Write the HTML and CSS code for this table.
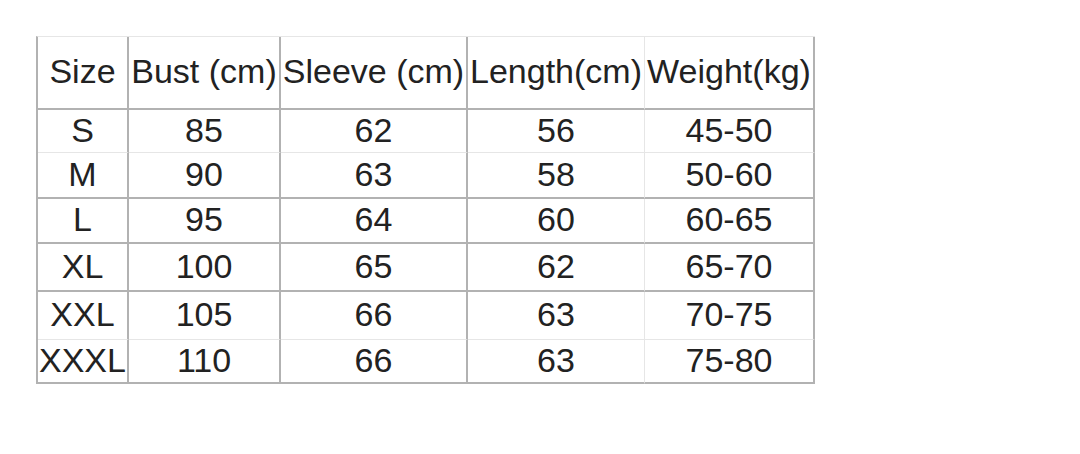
FILE: index.html
```html
<!DOCTYPE html>
<html>
<head>
<meta charset="utf-8">
<link rel="stylesheet" href="styles.css">
</head>
<body>
<div class="page">
  <div class="chart">
    <div class="row head">
      <div class="cell">Size</div>
      <div class="cell">Bust (cm)</div>
      <div class="cell">Sleeve (cm)</div>
      <div class="cell lt">Length(cm)</div>
      <div class="cell">Weight(kg)</div>
    </div>
    <div class="row r1 light">
      <div class="cell">S</div>
      <div class="cell">85</div>
      <div class="cell">62</div>
      <div class="cell lt">56</div>
      <div class="cell">45-50</div>
    </div>
    <div class="row r2">
      <div class="cell">M</div>
      <div class="cell">90</div>
      <div class="cell">63</div>
      <div class="cell lt">58</div>
      <div class="cell">50-60</div>
    </div>
    <div class="row r3">
      <div class="cell">L</div>
      <div class="cell">95</div>
      <div class="cell">64</div>
      <div class="cell lt">60</div>
      <div class="cell">60-65</div>
    </div>
    <div class="row r4">
      <div class="cell">XL</div>
      <div class="cell">100</div>
      <div class="cell">65</div>
      <div class="cell lt">62</div>
      <div class="cell">65-70</div>
    </div>
    <div class="row r5 light">
      <div class="cell">XXL</div>
      <div class="cell">105</div>
      <div class="cell">66</div>
      <div class="cell lt">63</div>
      <div class="cell">70-75</div>
    </div>
    <div class="row r6">
      <div class="cell">XXXL</div>
      <div class="cell">110</div>
      <div class="cell">66</div>
      <div class="cell lt">63</div>
      <div class="cell">75-80</div>
    </div>
  </div>
</div>
</body>
</html>
```

FILE: styles.css
```css
html, body {
  margin: 0;
  padding: 0;
  background: #ffffff;
}
.page {
  padding: 36px 0 0 36px;
}
.chart {
  display: inline-flex;
  flex-direction: column;
  border-left: 2px solid #b2b2b2;
  border-top: 1px solid #e6e6e6;
  font-family: "Liberation Sans", Arial, sans-serif;
  font-size: 34px;
  color: #222222;
}
.row {
  display: grid;
  grid-template-columns: 91px 152px 187px 177px 170px;
  box-sizing: border-box;
}
.cell {
  box-sizing: border-box;
  display: flex;
  align-items: center;
  justify-content: center;
  white-space: nowrap;
  padding-bottom: 2px;
  border-right: 2px solid #b2b2b2;
  border-bottom: 2px solid #b2b2b2;
  overflow: visible;
}
.cell.lt {
  border-right: 1px solid #e6e6e6;
}
.light .cell {
  border-bottom: 1px solid #e6e6e6;
}
.head { height: 73px; }
.head .cell { padding-bottom: 3px; }
.r1 { height: 43px; }
.r2 { height: 46px; }
.r3 { height: 45px; }
.r4 { height: 48px; }
.r5 { height: 48px; }
.r6 { height: 44px; }
```
